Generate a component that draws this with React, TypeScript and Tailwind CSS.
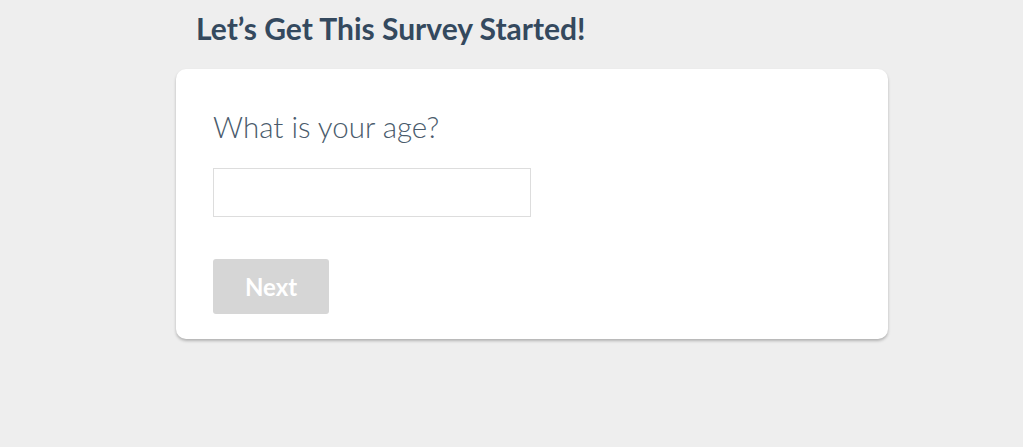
export default function App() {
  return (
    <div className="min-h-[447px] bg-[#eeeeee] font-['Lato',sans-serif]">
      <div className="ml-[176px] w-[712px] pt-[11px]">
        <h1 className="pl-[20px] text-[30px] font-bold leading-[34px] text-[#34495e]">
          Let’s Get This Survey Started!
        </h1>
        <div className="mt-[24px] rounded-[10px] bg-white px-[37px] pt-[40px] pb-[25px] shadow-[0_2px_3px_rgba(0,0,0,0.25)]">
          <label className="block text-[29.5px] font-light leading-[36px] text-[#4a5b6c]">
            What is your age?
          </label>
          <input
            type="text"
            className="mt-[23px] block h-[49px] w-[318px] border border-[#dddddd] px-3 outline-none"
          />
          <button
            disabled
            className="mt-[42px] h-[55px] w-[116px] rounded-[3px] bg-[#d6d6d6] text-[24px] font-bold text-white"
          >
            Next
          </button>
        </div>
      </div>
    </div>
  );
}
